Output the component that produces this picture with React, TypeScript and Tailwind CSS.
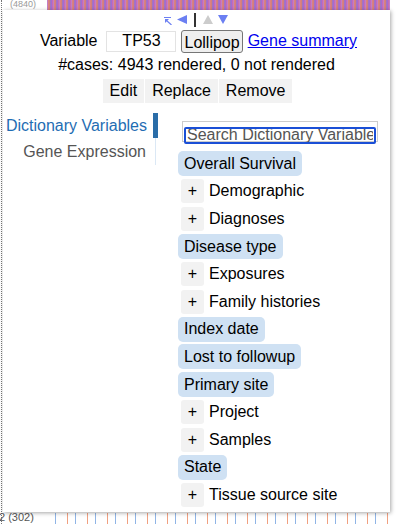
import React from "react";

type Item = { label: string; expandable?: boolean };

const items: Item[] = [
  { label: "Overall Survival" },
  { label: "Demographic", expandable: true },
  { label: "Diagnoses", expandable: true },
  { label: "Disease type" },
  { label: "Exposures", expandable: true },
  { label: "Family histories", expandable: true },
  { label: "Index date" },
  { label: "Lost to followup" },
  { label: "Primary site" },
  { label: "Project", expandable: true },
  { label: "Samples", expandable: true },
  { label: "State" },
  { label: "Tissue source site", expandable: true },
];

const TermRow = ({ item }: { item: Item }) => {
  if (item.expandable) {
    return (
      <div className="flex items-center h-[27.6px] pl-[3px]">
        <span className="flex items-center justify-center w-[23px] h-[24px] bg-[#f2f2f2] rounded-[3px]">
          +
        </span>
        <span className="ml-[5px]">{item.label}</span>
      </div>
    );
  }
  return (
    <div className="flex items-center h-[27.6px]">
      <span className="px-[6px] h-[25px] flex items-center bg-[#cfe1f3] rounded-[5px]">
        {item.label}
      </span>
    </div>
  );
};

const App = () => {
  return (
    <div className="relative w-[400px] h-[524px] overflow-hidden bg-white font-['Liberation_Sans',Arial,sans-serif] text-[16px] text-black">
      {/* plot behind the menu */}
      <div className="absolute left-[1px] top-0 bottom-0 border-l border-dotted border-[#777]" />
      <div className="absolute left-[10px] top-0 text-[9px] leading-[9px] text-[#999]">(4840)</div>
      <div className="absolute left-[47px] top-0 w-[343px] h-[10px] bg-[repeating-linear-gradient(90deg,#b57be8_0px,#e8845c_2px,#8e6ee0_4px,#d86aa8_6px)]" />
      <div className="absolute left-[-1px] top-[512px] text-[11px] leading-[11px] text-[#555]">2 (302)</div>
      <div className="absolute left-[48px] top-[513px] w-[342px] h-[11px] bg-[repeating-linear-gradient(90deg,transparent_0px,transparent_7px,#8fb4e6_7px,#8fb4e6_8px,transparent_8px,transparent_19px,#f0a080_19px,#f0a080_20px)]" />

      {/* menu */}
      <div className="absolute left-[3px] top-[10px] w-[387px] h-[502px] bg-white shadow-[1px_1px_4px_rgba(0,0,0,0.35)]">
        <div className="flex items-center justify-center h-[18px] pt-[1px] pr-[2px]">
          <svg width="8" height="8" viewBox="0 0 8 8" className="mr-[5px] mt-[2px]">
            <path d="M0 0.5H7" stroke="#6b7ff2" strokeWidth="1" />
            <path d="M1 2H5L1 6Z" fill="#6b7ff2" />
            <path d="M2.5 3.5L7.5 8" stroke="#6b7ff2" strokeWidth="1.2" />
          </svg>
          <svg width="10" height="9" viewBox="0 0 10 9">
            <path d="M0 4.5L10 0V9Z" fill="#6b7ff2" />
          </svg>
          <span className="w-[2px] h-[14px] bg-[#333] mx-[7px]" />
          <svg width="10" height="9" viewBox="0 0 10 9" className="mr-[5px]">
            <path d="M5 0L10 9H0Z" fill="#cccccc" />
          </svg>
          <svg width="10" height="9" viewBox="0 0 10 9">
            <path d="M0 0H10L5 9Z" fill="#6b7ff2" />
          </svg>
        </div>

        <div className="flex items-center justify-center mt-[1px] h-[24px] pl-[4px]">
          <span className="mr-[9px]">Variable</span>
          <div className="w-[70px] h-[21px] border border-[#e3e3e3] flex items-center justify-center">
            TP53
          </div>
          <button className="ml-[5px] h-[23px] px-[2px] border border-[#767676] rounded-[3px] bg-[#efefef]">
            Lollipop
          </button>
          <a className="ml-[5px] text-[#0000ee] underline">Gene summary</a>
        </div>

        <div className="text-center mt-[2px] h-[20px] leading-[20px]">
          #cases: 4943 rendered, 0 not rendered
        </div>

        <div className="flex justify-center gap-[1px] mt-[4px] pl-[2px]">
          <button className="h-[24px] px-[7px] bg-[#f2f2f2]">Edit</button>
          <button className="h-[24px] px-[7px] bg-[#f2f2f2]">Replace</button>
          <button className="h-[24px] px-[7px] bg-[#f2f2f2]">Remove</button>
        </div>

        <div className="flex mt-[10px]">
          <div className="w-[155px] flex flex-col items-end">
            <div className="flex items-stretch h-[25px]">
              <span className="text-[#1f6db3] pr-[6px] flex items-center">Dictionary Variables</span>
              <span className="w-[5px] bg-[#2a6da8]" />
            </div>
            <div className="flex items-stretch h-[27px]">
              <span className="text-[#555] pr-[9px] flex items-center">Gene Expression</span>
              <span className="w-[1px] mr-[2px] bg-[#dbe8f5]" />
            </div>
          </div>

          <div className="ml-[20px] flex flex-col">
            <div className="h-[21px] w-[196px] mt-[8px] ml-[4px] mb-[8px] border border-[#ccc] p-[1px]">
              <input
                className="w-full h-full border-2 border-[#1a4fd6] rounded-[2px] px-[1px] outline-none placeholder:text-[#555] text-[16px]"
                placeholder="Search Dictionary Variables"
              />
            </div>
            {items.map((item) => (
              <TermRow key={item.label} item={item} />
            ))}
          </div>
        </div>
      </div>
    </div>
  );
};

export default App;
